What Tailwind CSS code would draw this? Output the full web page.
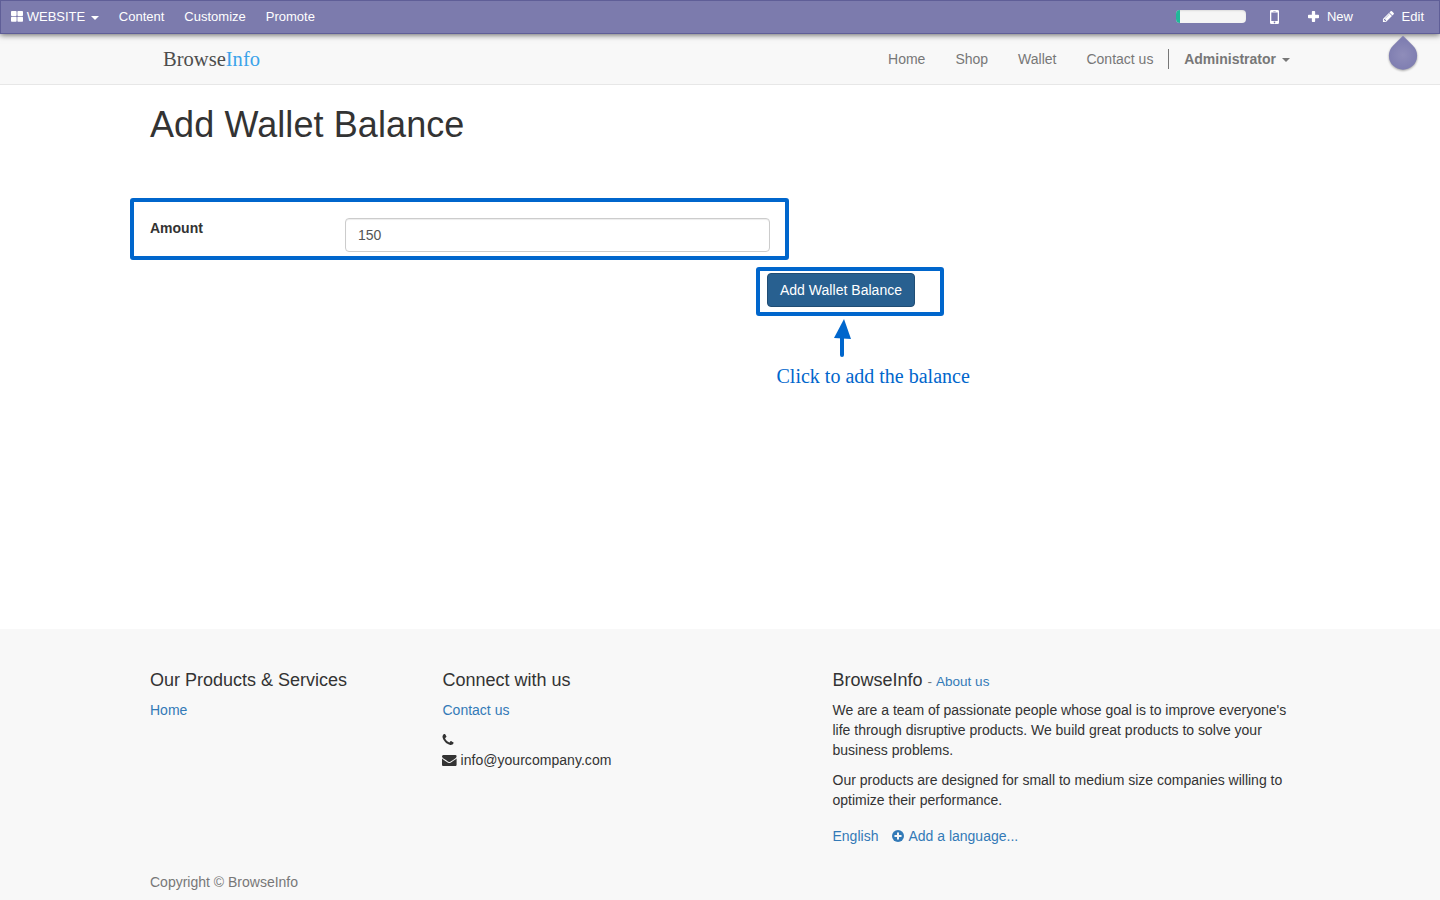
<!DOCTYPE html>
<html lang="en">
<head>
<meta charset="utf-8">
<title>Add Wallet Balance</title>
<script src="https://cdn.jsdelivr.net/npm/@tailwindcss/browser@4"></script>
</head>
<body class="h-[900px] overflow-hidden bg-white font-['Liberation_Sans',Arial,sans-serif] text-[14px] leading-5 text-[#333]">
<div class="flex h-full flex-col">

  <!-- Editor toolbar -->
  <div class="relative z-10 flex h-[34px] shrink-0 items-center justify-between border border-[#5f5e97] bg-[#7c7bad] pr-[15px] pl-[10px] text-[13px] leading-[18px] text-white shadow-[0_1px_6px_rgba(0,0,0,0.6)]">
    <div class="flex items-center gap-5">
      <a class="flex items-center">
        <svg class="mr-[3.700px] mb-px" width="12" height="11" viewBox="0 0 12 11" fill="currentColor"><rect width="5.600" height="5" rx=".8"/><rect x="6.400" width="5.600" height="5" rx=".8"/><rect y="5.800" width="5.600" height="5" rx=".8"/><rect x="6.400" y="5.800" width="5.600" height="5" rx=".8"/></svg>
        WEBSITE
        <span class="mt-[2px] ml-[5.600px] border-x-4 border-t-4 border-x-transparent border-t-white"></span>
      </a>
      <a>Content</a>
      <a>Customize</a>
      <a>Promote</a>
    </div>
    <div class="flex items-center">
      <div class="mr-[24.600px] mb-px h-[13px] w-[70px] overflow-hidden rounded-[4px] bg-[#f5f5f5] shadow-[inset_0_1px_2px_rgba(0,0,0,0.1)]"><div class="h-full w-[4px] bg-[#21b799]"></div></div>
      <svg class="mr-[29px]" width="9" height="14" viewBox="0 0 9 14"><path fill="white" fill-rule="evenodd" d="M1.300 0h6.400Q9 0 9 1.300v11.400Q9 14 7.700 14H1.300Q0 14 0 12.700V1.300Q0 0 1.300 0zM1.300 2.500v8.400h6.400V2.500zM3.300 1v.6h2.400V1zM4.500 11.600a.8.8 0 1 0 .01 0z"/></svg>
      <svg class="mr-[7.500px] mb-[2px]" width="11" height="11" viewBox="0 0 10 10"><path fill="white" d="M4.200 0h1.600q.7 0 .7.700v2.800h2.800q.7 0 .7.700v1.600q0 .7-.7.700H6.500v2.800q0 .7-.7.700H4.200q-.7 0-.7-.7V6.500H.7Q0 6.500 0 5.800V4.200q0-.7.700-.7h2.800V.7q0-.7.700-.7z"/></svg>
      <a class="mr-[28.600px]">New</a>
      <svg class="mr-[7px] mb-[2px]" width="13" height="13" viewBox="0 0 1792 1792"><path fill="white" d="M491 1536l91-91-235-235-91 91v107h128v128h107zm523-928q0-22-22-22-10 0-17 7l-542 542q-7 7-7 17 0 22 22 22 10 0 17-7l542-542q7-7 7-17zm-54-192l416 416-832 832h-416v-416zm683 96q0 53-37 90l-166 166-416-416 166-165q36-38 90-38 53 0 91 38l235 234q37 39 37 91z"/></svg>
      <a>Edit</a>
    </div>
    <!-- Tour tip -->
    <svg class="absolute top-[32px] left-[1383px] drop-shadow-[0_1px_1px_rgba(0,0,0,0.35)]" width="38" height="42" viewBox="0 0 38 42">
      <defs><radialGradient id="drop" gradientUnits="userSpaceOnUse" cx="19" cy="22" r="15"><stop offset="0" stop-color="#8f8dba"/><stop offset="1" stop-color="#7f7eb1"/></radialGradient></defs>
      <path fill="url(#drop)" d="M19 2.700L29 12.700A14.100 14.100 0 1 1 9 12.700z"/>
    </svg>
  </div>

  <!-- Site navigation -->
  <header class="h-[51px] shrink-0 border-b border-[#e7e7e7] bg-[#f8f8f8]">
    <div class="mx-auto flex h-[50px] w-[1140px] items-center justify-between text-[#777]">
      <svg class="ml-[13px]" width="100" height="30" viewBox="0 0 100 30" font-family="Liberation Serif, serif" font-size="20"><text x="0" y="22" textLength="97" lengthAdjust="spacingAndGlyphs" fill="#4d4d4d">Browse<tspan fill="#3ba3ea">Info</tspan></text></svg>
      <nav class="flex items-center">
        <a class="mr-[30px]">Home</a>
        <a class="mr-[30px]">Shop</a>
        <a class="mr-[30px]">Wallet</a>
        <a class="border-r border-[#777] pr-[14.800px]">Contact us</a>
        <a class="flex items-center pl-[15px] font-bold">Administrator<span class="mt-[1px] ml-[6px] border-x-4 border-t-4 border-x-transparent border-t-[#777]"></span></a>
      </nav>
    </div>
  </header>

  <!-- Wallet form -->
  <main class="mx-auto h-[544px] w-[1140px] shrink-0">
    <h1 class="pt-5 text-[36px] leading-[39.600px] tracking-[0.090px]">Add Wallet Balance</h1>
    <div class="mt-[53px] -ml-5 flex h-[62px] w-[659px] items-start rounded-[3px] border-4 border-[#0066cc] pt-4 pl-4">
      <label class="w-[195px] font-bold" for="amount">Amount</label>
      <input id="amount" class="h-[34px] w-[425px] rounded-[4px] border border-[#ccc] bg-white px-3 text-[#555] shadow-[inset_0_1px_1px_rgba(0,0,0,0.075)]" value="150">
    </div>
    <div class="mt-[7px] ml-[606px] h-[49px] w-[188px] rounded-[3px] border-4 border-[#0066cc] pt-[2px] pl-[7px]">
      <button class="h-[34px] w-[148px] rounded-[4px] border border-[#204d74] bg-[#286090] tracking-[0.030px] text-white">Add Wallet Balance</button>
    </div>
    <svg class="mt-[3px] ml-[683px]" width="20" height="40" viewBox="0 0 20 40"><path fill="#0066cc" d="M11 0L18 20 1 19z"/><path stroke="#0066cc" stroke-width="4" stroke-linecap="round" d="M9 19V36"/></svg>
    <p class="mt-[5px] ml-[626.500px] font-['Liberation_Serif',serif] text-[20px] leading-6 text-[#0066cc]">Click to add the balance</p>
  </main>

  <!-- Footer -->
  <footer class="flex-1 bg-[#f8f8f8]">
    <div class="mx-auto w-[1140px] pt-[41px]">
      <div class="flex h-[192px]">
        <section class="w-[292.500px]">
          <h4 class="mb-[10px] text-[18px] leading-5">Our Products &amp; Services</h4>
          <a class="text-[#337ab7]">Home</a>
        </section>
        <section class="w-[390px]">
          <h4 class="mb-[10px] text-[18px] leading-5">Connect with us</h4>
          <a class="mb-[10px] block text-[#337ab7]">Contact us</a>
          <div class="flex h-5 items-center"><svg class="-ml-[1.500px]" width="14" height="14" viewBox="0 0 1792 1792"><path fill="#333" d="M1600 1240q0 27-10 70.500t-21 68.500q-21 50-122 106-94 51-186 51-27 0-53-3.500t-57.500-12.500-47-14.500-55.500-20.500-49-18q-98-35-175-83-127-79-264-216t-216-264q-48-77-83-175-3-9-18-49t-20.500-55.500-14.500-47-12.500-57.500-3.500-53q0-92 51-186 56-101 106-122 25-11 68.500-21t70.500-10q14 0 21 3 18 6 53 76 11 19 30 54t35 63.500 31 53.500q3 4 17.500 25t21.500 35.500 7 28.500q0 20-28.500 50t-62 55-62 53-28.500 46q0 9 5 22.500t8.500 20.500 14 24 11.500 19q76 137 174 235t235 174q2 1 19 11.500t24 14 20.500 8.500 22.500 5q18 0 46-28.500t53-62 55-62 50-28.500q14 0 28.500 7t35.500 21.500 25 17.500q25 15 53.500 31t63.500 35 54 30q70 35 76 53 3 7 3 21z"/></svg></div>
          <div class="flex h-5 items-center tracking-[0.040px]"><svg class="-ml-[0.500px] mr-[3.900px]" width="14.600" height="14" viewBox="0 0 1792 1792" preserveAspectRatio="none"><path fill="#333" d="M1792 710v794q0 66-47 113t-113 47h-1472q-66 0-113-47t-47-113v-794q44 49 101 87 362 246 497 345 57 42 92.500 65.500t94.500 48 110 24.500h2q51 0 110-24.500t94.500-48 92.500-65.500q170-123 498-345 57-39 100-87zm0-294q0 79-49 151t-122 123q-376 261-468 325-10 7-42.500 31t-54 38.500-52 32.500-57.500 27-50 9h-2q-23 0-50-9t-57.500-27-52-32.500-54-38.500-42.500-31q-91-64-262-182.500t-205-142.500q-62-42-117-115.500t-55-136.500q0-78 41.500-130t118.500-52h1472q65 0 112.500 47t47.500 113z"/></svg>info@yourcompany.com</div>
        </section>
        <section class="w-[457.500px]">
          <h4 class="mb-[10px] h-5 text-[18px] leading-5">BrowseInfo <small class="text-[13.500px] text-[#777]">- <a class="ml-[0.300px] text-[#337ab7]">About us</a></small></h4>
          <p class="mb-[10px]">We are a team of passionate people whose goal is to improve everyone's<br>life through disruptive products. We build great products to solve your<br>business problems.</p>
          <p class="mb-4">Our products are designed for small to medium size companies willing to<br>optimize their performance.</p>
          <div class="flex items-center text-[#337ab7]"><a class="mr-[14px]">English</a><svg class="mr-[4px]" width="12" height="12" viewBox="0 0 12 12"><circle cx="6" cy="6" r="6" fill="currentColor"/><path stroke="#f8f8f8" stroke-width="2" stroke-linecap="round" d="M6 3.200V8.800M3.200 6H8.800"/></svg><a>Add a language...</a></div>
        </section>
      </div>
      <p class="mt-[10px] text-[#777]">Copyright © BrowseInfo</p>
    </div>
  </footer>
</div>
</body>
</html>
